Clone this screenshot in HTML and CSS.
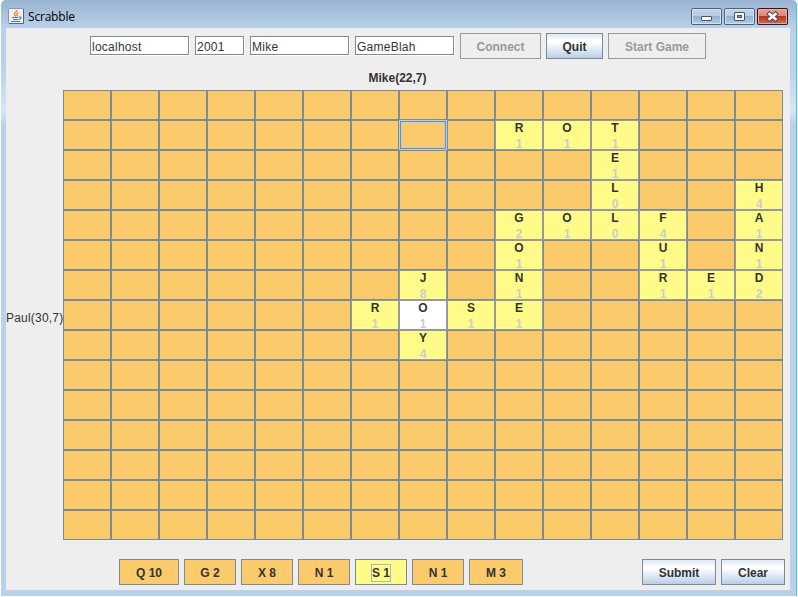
FILE: index.html
```html
<!DOCTYPE html>
<html lang="en">
<head>
<meta charset="utf-8">
<title>Scrabble</title>
<link rel="stylesheet" href="styles.css">
</head>
<body>
<div class="window">
  <header class="titlebar">
    <svg class="app-icon" width="16" height="16" viewBox="0 0 16 16">
      <rect x=".5" y=".5" width="15" height="15" rx="1" fill="#eef0f2" stroke="#8795a5"/>
      <path d="M15.500 1v14.500H1" fill="none" stroke="#56677a"/>
      <path d="M9 2c.6 2-3.600 2.500-2.500 4.500L8 8.500M10.500 4.500C8.500 5.500 8 6.500 9.500 8.200" fill="none" stroke="#ee8430" stroke-width="1.300"/>
      <path d="M4 9.500h6.500M5 11.500h5M3 13.500h9M11 9c3-.5 2.500 2-.5 2.500" fill="none" stroke="#55789b" stroke-width="1.100"/>
    </svg>
    <h1 class="title">Scrabble</h1>
    <div class="controls">
      <span class="control"><svg width="31" height="17" viewBox="0 0 31 17"><rect x="10.500" y="8.500" width="10" height="4" rx=".5" fill="#f8f8f6" stroke="#4c5567"/></svg></span>
      <span class="control"><svg width="31" height="17" viewBox="0 0 31 17"><rect x="10.500" y="4.500" width="10" height="8" rx=".5" fill="#f8f8f6" stroke="#4c5567"/><rect x="13.500" y="7.500" width="4" height="2" fill="#6f9bc8" stroke="#4c5567"/></svg></span>
      <span class="control close"><svg width="31" height="17" viewBox="0 0 31 17"><path d="M12.500 6l6 5M18.500 6l-6 5" stroke="#4c5060" stroke-width="4.600" stroke-linecap="square"/><path d="M12.500 6l6 5M18.500 6l-6 5" stroke="#f8f8f6" stroke-width="2.600" stroke-linecap="square"/></svg></span>
    </div>
  </header>
  <main class="content">
    <div class="toolbar">
      <span class="field">localhost</span>
      <span class="field port">2001</span>
      <span class="field">Mike</span>
      <span class="field">GameBlah</span>
      <span class="button connect disabled">Connect</span>
      <span class="button quit">Quit</span>
      <span class="button start disabled">Start Game</span>
    </div>
    <div class="player-top">Mike(22,7)</div>
    <div class="middle">
      <div class="player-left">Paul(30,7)</div>
      <div class="board" id="board"></div>
    </div>
    <div class="footer">
      <div class="rack">
        <span class="button tile wide">Q 10</span>
        <span class="button tile">G 2</span>
        <span class="button tile">X 8</span>
        <span class="button tile">N 1</span>
        <span class="button tile selected"><span class="focus">S 1</span></span>
        <span class="button tile">N 1</span>
        <span class="button tile last">M 3</span>
      </div>
      <span class="button submit">Submit</span>
      <span class="button clear">Clear</span>
    </div>
  </main>
</div>
<script src="board.js"></script>
</body>
</html>
```
FILE: styles.css
```css
* { box-sizing: border-box; }

body {
  margin: 0;
  width: 798px;
  height: 597px;
  overflow: hidden;
  background: #fff;
  font: 12px/14px "Liberation Sans", Arial, sans-serif;
  color: #333;
}

.window {
  width: 796px;
  height: 596px;
  margin-left: 1px;
  padding: 0 6px 6px 5px;
  border-right: 1px solid #35c9ea;
  border-radius: 5px 5px 0 0;
  background: linear-gradient(#99b4d1 0, #b9d1ea 28px, #bad1ea 70px, #d8e6f5 110px, #b9d1ea 125px);
}

.titlebar {
  height: 28px;
  padding: 8px 2px 0;
  display: flex;
  align-items: flex-start;
}

.app-icon { display: block; }

.title {
  margin: 0 0 0 4px;
  font: 12px/17px "Open Sans", "Noto Sans", sans-serif;
  letter-spacing: -0.2px;
  color: #000;
}

.controls {
  display: flex;
  gap: 2px;
  margin-left: auto;
}

.control {
  width: 31px;
  height: 17px;
  border-radius: 2px;
  background: linear-gradient(#c3d6ea 0, #b6cce4 48%, #94b1d0 50%, #b5d0ea 100%);
  box-shadow: inset 0 0 0 1px #50607c, inset 0 0 0 2px #d3e2f2;
}

.control svg { display: block; }

.control.close {
  background: linear-gradient(#e8a99c 0, #dc8675 45%, #b9341c 50%, #d1775c 100%);
  box-shadow: inset 0 0 0 1px #43121c, inset 0 0 0 2px #e5aaa0;
}

.content {
  width: 784px;
  height: 562px;
  background: #eee;
}

.toolbar {
  height: 36px;
  padding: 5px 0 0 84px;
  display: flex;
  align-items: flex-start;
  gap: 5px;
}

.field {
  width: 99px;
  height: 19px;
  margin: 3px 1px 0 0;
  padding: 3px 1px 0;
  border: 1px solid #7a8a99;
  background: #fff;
  box-shadow: 1px 1px #fff;
  letter-spacing: 0.25px;
  white-space: nowrap;
}

.port { width: 49px; }

.button {
  height: 26px;
  padding-top: 1px;
  border: 1px solid #7a8a99;
  display: flex;
  align-items: center;
  justify-content: center;
  font-weight: bold;
  white-space: nowrap;
  background: linear-gradient(#dde8f3 0, #fff 30%, #fff 35%, #b8cfe5 100%);
}

.button.disabled {
  border-color: #999;
  color: #999;
  background: #eee;
}

.connect { width: 81px; }
.quit { width: 57px; }
.start { width: 98px; }

.player-top {
  height: 26px;
  padding-top: 7px;
  text-align: center;
  font-weight: bold;
  text-indent: -1px;
}

.middle {
  display: flex;
  align-items: center;
  height: 450px;
}

.player-left {
  width: 57px;
  padding-top: 5px;
  letter-spacing: 0.2px;
  white-space: nowrap;
}

.board {
  display: grid;
  grid-template-columns: repeat(15, 48px);
  grid-auto-rows: 30px;
}

.cell {
  border: 1px solid #7a8a99;
  background: #fbcb6b;
  font-weight: bold;
  text-align: center;
  overflow: hidden;
}

.cell.played {
  border-color: #999;
  background: #fffb88;
}

.cell.centre { background: #fff; }

.cell.cursor {
  border-color: #b8cfe5;
  box-shadow: inset 0 0 0 1px #7a8a99, inset 0 0 0 2px #b8cfe5;
}

.letter, .score {
  display: block;
  height: 16px;
  line-height: 15px;
}

.score { color: #ccc; }

.footer {
  display: flex;
  gap: 5px;
  padding: 19px 5px 0 113px;
}

.rack {
  display: flex;
  gap: 5px;
  margin-right: auto;
}

.tile { width: 52px; background: #fbcb6b; }
.tile.wide { width: 60px; }
.tile.last { width: 54px; }
.tile.selected { background: #fffb88; }

.focus {
  width: 20px;
  height: 18px;
  line-height: 17px;
  text-align: center;
  border: 1px solid #a3b8cc;
}

.submit { width: 74px; }
.clear { width: 64px; }
```
FILE: board.js
```js
const SIZE = 15;

const rows = [
  "...............",
  ".........ROT...",
  "...........E...",
  "...........L..H",
  ".........GOLF.A",
  ".........O..U.N",
  ".......J.N..RED",
  "......ROSE.....",
  ".......Y.......",
];

const scores = [
  "...............",
  ".........111...",
  "...........1...",
  "...........0..4",
  ".........2104.1",
  ".........1..1.1",
  ".......8.1..112",
  "......1111.....",
  ".......4.......",
];

const board = document.getElementById("board");

for (let r = 0; r < SIZE; r++) {
  for (let c = 0; c < SIZE; c++) {
    const cell = document.createElement("div");
    cell.className = "cell";
    const letter = rows[r] ? rows[r][c] : ".";
    if (letter !== ".") {
      cell.classList.add("played");
      for (const [name, text] of [["letter", letter], ["score", scores[r][c]]]) {
        const line = document.createElement("span");
        line.className = name;
        line.textContent = text;
        cell.append(line);
      }
    }
    if (r === 7 && c === 7) cell.classList.add("centre");
    if (r === 1 && c === 7) cell.classList.add("cursor");
    board.append(cell);
  }
}
```
